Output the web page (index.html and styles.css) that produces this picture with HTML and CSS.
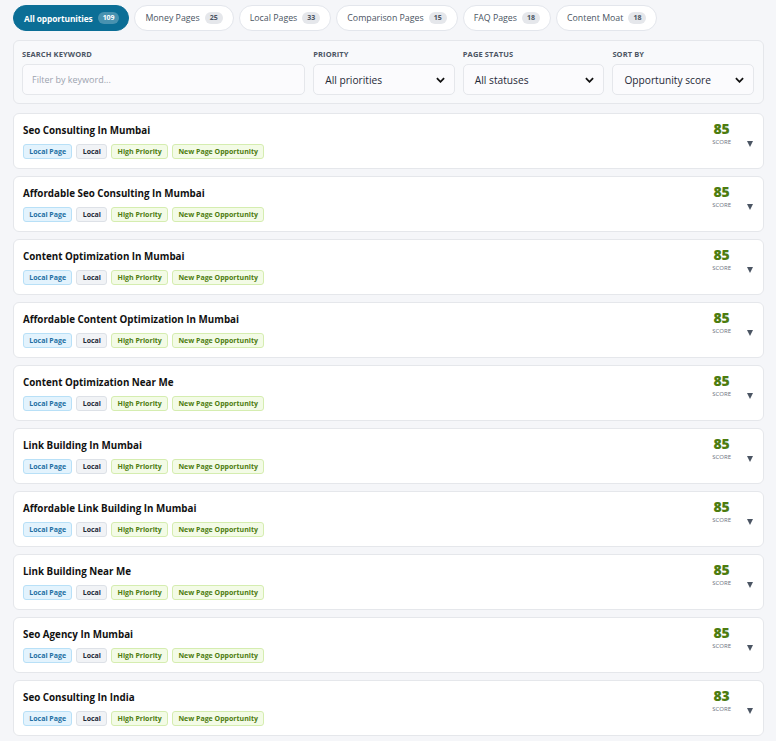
FILE: index.html
```html
<!DOCTYPE html>
<html>
<head>
<meta charset="utf-8">
<link rel="stylesheet" href="styles.css">
</head>
<body>
<div class="tabs">
  <button class="tab active">All opportunities <span class="count">109</span></button>
  <button class="tab">Money Pages <span class="count">25</span></button>
  <button class="tab">Local Pages <span class="count">33</span></button>
  <button class="tab">Comparison Pages <span class="count">15</span></button>
  <button class="tab">FAQ Pages <span class="count">18</span></button>
  <button class="tab">Content Moat <span class="count">18</span></button>
</div>

<div class="filters">
  <div class="field">
    <label>Search keyword</label>
    <div class="input placeholder">Filter by keyword...</div>
  </div>
  <div class="field">
    <label>Priority</label>
    <div class="input select">All priorities<svg class="chev" viewBox="0 0 10 6"><path d="M1 1l4 4 4-4" fill="none" stroke="#111" stroke-width="2"/></svg></div>
  </div>
  <div class="field">
    <label>Page status</label>
    <div class="input select">All statuses<svg class="chev" viewBox="0 0 10 6"><path d="M1 1l4 4 4-4" fill="none" stroke="#111" stroke-width="2"/></svg></div>
  </div>
  <div class="field">
    <label>Sort by</label>
    <div class="input select">Opportunity score<svg class="chev" viewBox="0 0 10 6"><path d="M1 1l4 4 4-4" fill="none" stroke="#111" stroke-width="2"/></svg></div>
  </div>
</div>

<div class="list">
  <div class="card"><div class="main"><div class="title">Seo Consulting In Mumbai</div><div class="badges"><span class="b blue">Local Page</span><span class="b gray">Local</span><span class="b lime">High Priority</span><span class="b lime">New Page Opportunity</span></div></div><div class="score"><div class="num">85</div><div class="lbl">SCORE</div></div><span class="caret"></span></div>
  <div class="card"><div class="main"><div class="title">Affordable Seo Consulting In Mumbai</div><div class="badges"><span class="b blue">Local Page</span><span class="b gray">Local</span><span class="b lime">High Priority</span><span class="b lime">New Page Opportunity</span></div></div><div class="score"><div class="num">85</div><div class="lbl">SCORE</div></div><span class="caret"></span></div>
  <div class="card"><div class="main"><div class="title">Content Optimization In Mumbai</div><div class="badges"><span class="b blue">Local Page</span><span class="b gray">Local</span><span class="b lime">High Priority</span><span class="b lime">New Page Opportunity</span></div></div><div class="score"><div class="num">85</div><div class="lbl">SCORE</div></div><span class="caret"></span></div>
  <div class="card"><div class="main"><div class="title">Affordable Content Optimization In Mumbai</div><div class="badges"><span class="b blue">Local Page</span><span class="b gray">Local</span><span class="b lime">High Priority</span><span class="b lime">New Page Opportunity</span></div></div><div class="score"><div class="num">85</div><div class="lbl">SCORE</div></div><span class="caret"></span></div>
  <div class="card"><div class="main"><div class="title">Content Optimization Near Me</div><div class="badges"><span class="b blue">Local Page</span><span class="b gray">Local</span><span class="b lime">High Priority</span><span class="b lime">New Page Opportunity</span></div></div><div class="score"><div class="num">85</div><div class="lbl">SCORE</div></div><span class="caret"></span></div>
  <div class="card"><div class="main"><div class="title">Link Building In Mumbai</div><div class="badges"><span class="b blue">Local Page</span><span class="b gray">Local</span><span class="b lime">High Priority</span><span class="b lime">New Page Opportunity</span></div></div><div class="score"><div class="num">85</div><div class="lbl">SCORE</div></div><span class="caret"></span></div>
  <div class="card"><div class="main"><div class="title">Affordable Link Building In Mumbai</div><div class="badges"><span class="b blue">Local Page</span><span class="b gray">Local</span><span class="b lime">High Priority</span><span class="b lime">New Page Opportunity</span></div></div><div class="score"><div class="num">85</div><div class="lbl">SCORE</div></div><span class="caret"></span></div>
  <div class="card"><div class="main"><div class="title">Link Building Near Me</div><div class="badges"><span class="b blue">Local Page</span><span class="b gray">Local</span><span class="b lime">High Priority</span><span class="b lime">New Page Opportunity</span></div></div><div class="score"><div class="num">85</div><div class="lbl">SCORE</div></div><span class="caret"></span></div>
  <div class="card"><div class="main"><div class="title">Seo Agency In Mumbai</div><div class="badges"><span class="b blue">Local Page</span><span class="b gray">Local</span><span class="b lime">High Priority</span><span class="b lime">New Page Opportunity</span></div></div><div class="score"><div class="num">85</div><div class="lbl">SCORE</div></div><span class="caret"></span></div>
  <div class="card"><div class="main"><div class="title">Seo Consulting In India</div><div class="badges"><span class="b blue">Local Page</span><span class="b gray">Local</span><span class="b lime">High Priority</span><span class="b lime">New Page Opportunity</span></div></div><div class="score"><div class="num">83</div><div class="lbl">SCORE</div></div><span class="caret"></span></div>
</div>
</body>
</html>
```

FILE: styles.css
```css
* { box-sizing: border-box; }
html, body { margin: 0; }
body {
  background: #f5f6f9;
  font-family: "Open Sans", "Noto Sans", sans-serif;
  color: #111827;
  padding: 5px 12px 0 13px;
}
.tabs {
  display: flex;
  gap: 5px;
  align-items: center;
}
.tab {
  font-family: inherit;
  height: 26px;
  border-radius: 13px;
  border: 1px solid #e3e6ec;
  background: #fff;
  color: #4b5563;
  font-size: 8.8px;
  padding: 0 10px;
  display: flex;
  align-items: center;
  gap: 5px;
  cursor: pointer;
}
.tab.active {
  background: #0b6e96;
  border-color: #0b6e96;
  color: #fff;
  font-weight: 700;
  font-size: 8.4px;
  padding: 0 9px 0 10px;
  letter-spacing: -0.1px;
}
.count {
  background: #e5e7eb;
  color: #4b5563;
  border-radius: 8px;
  font-size: 7px;
  font-weight: 700;
  padding: 1px 5px;
  line-height: 10px;
}
.tab.active .count {
  background: rgba(255,255,255,0.25);
  color: #fff;
}
.filters {
  margin-top: 9px;
  background: #f8f9fb;
  border: 1px solid #e5e7eb;
  border-radius: 6px;
  padding: 8px 9px 8px 8px;
  display: grid;
  grid-template-columns: 2fr 1fr 1fr 1fr;
  gap: 8px;
}
.field label {
  display: block;
  font-size: 7.5px;
  font-weight: 700;
  text-transform: uppercase;
  color: #4b5563;
  letter-spacing: 0.1px;
  margin-bottom: 5px;
  line-height: 10px;
}
.input {
  height: 31px;
  border: 1px solid #e5e7eb;
  border-radius: 5px;
  background: #fbfbfd;
  font-size: 10.2px;
  color: #1f2937;
  display: flex;
  align-items: center;
  padding: 0 9px 0 11px;
}
.input.placeholder { color: #9ca3af; font-size: 9px; padding-left: 9px; }
.select { justify-content: space-between; }
.chev { width: 9px; height: 6px; }
.list {
  margin-top: 9px;
  display: flex;
  flex-direction: column;
  gap: 7px;
}
.card {
  height: 56px;
  background: #fff;
  border: 1px solid #e5e7eb;
  border-radius: 6px;
  padding: 0 10px 0 9px;
  display: flex;
  align-items: center;
}
.main {
  flex: 1;
  align-self: flex-start;
  margin-top: 10px;
}
.title {
  font-size: 9.8px;
  font-weight: 700;
  color: #111;
  line-height: 13px;
  margin-bottom: 7px;
}
.badges { display: flex; gap: 4px; }
.b {
  font-size: 7px;
  font-weight: 700;
  height: 15px;
  display: flex;
  align-items: center;
  padding: 0 5.3px;
  border-radius: 3px;
  border: 1px solid;
}
.b.blue { background: #e3f3fd; border-color: #b8e0f7; color: #1d6fa3; }
.b.gray { background: #f1f3f6; border-color: #dde1e7; color: #1f2937; }
.b.lime { background: #f3fbe6; border-color: #d5edb0; color: #4d7c0f; }
.score {
  text-align: center;
  margin-top: -15px;
}
.num {
  font-size: 14px;
  font-weight: 800;
  color: #4d7c0f;
  line-height: 14px;
}
.lbl {
  font-size: 6px;
  color: #6b7280;
  line-height: 7px;
  margin-top: 3px;
}
.caret {
  width: 0;
  height: 0;
  border-left: 3.5px solid transparent;
  border-right: 3.5px solid transparent;
  border-top: 6px solid #4b5563;
  margin-left: 16px;
  margin-top: 5px;
}
```
